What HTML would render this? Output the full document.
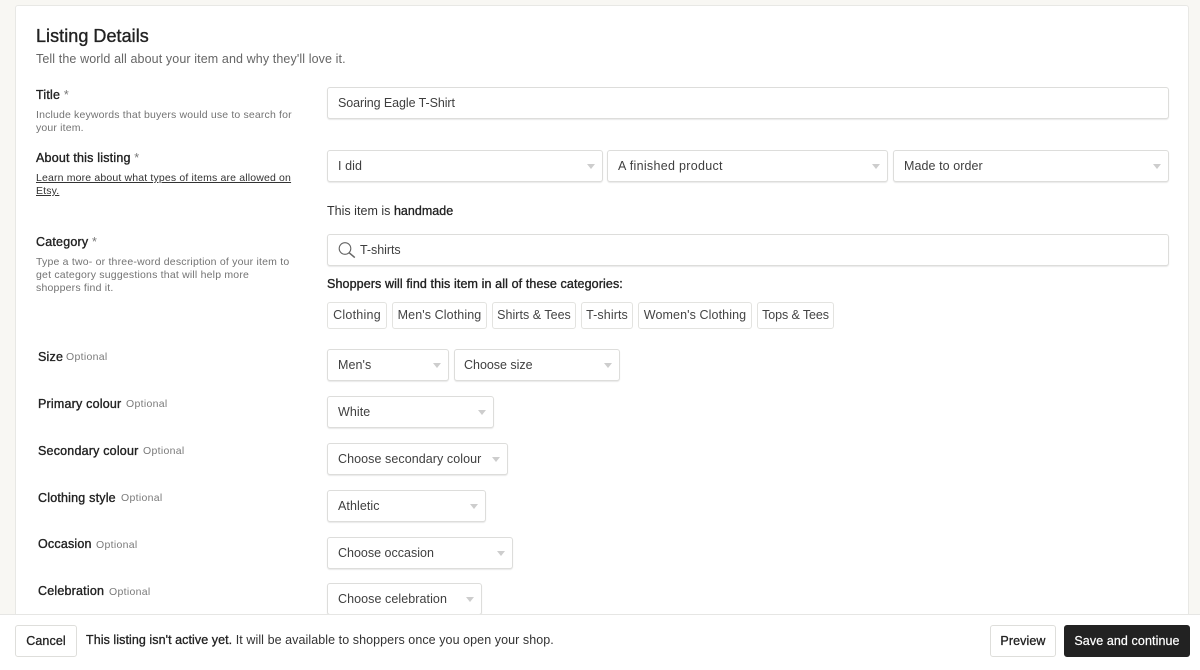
<!DOCTYPE html>
<html><head><meta charset="utf-8">
<style>
html,body{margin:0;padding:0}
body{width:1200px;height:670px;position:relative;overflow:hidden;background:#f8f7f3;font-family:"Liberation Sans",Arial,sans-serif;color:#2b2b2b}
.card{position:absolute;left:15px;top:5px;width:1174px;height:640px;background:#fff;border:1px solid #e8e8e5;border-radius:3px;box-sizing:border-box}
.t{position:absolute;white-space:nowrap;line-height:16px}
.h{font-size:18px;font-weight:400;color:#222;-webkit-text-stroke:.35px #222;letter-spacing:.05px}
.l{font-size:12.5px;color:#222;-webkit-text-stroke:.35px #222;letter-spacing:.2px}
.s{font-size:10.5px;color:#737373;line-height:13px;letter-spacing:.16px}
.o{font-size:10.5px;color:#7a7a7a;letter-spacing:.3px}
.star{color:#777;-webkit-text-stroke:0}
.b{position:absolute;box-sizing:border-box;background:#fff;border:1px solid #dddddb;border-radius:3px;box-shadow:0 1px 1px rgba(0,0,0,.09);height:32px;font-size:12.5px;line-height:30px;padding-left:10px;color:#3f3f3f;white-space:nowrap;letter-spacing:.07px}
.b.sel::after{content:"";position:absolute;right:7.5px;top:13px;border-left:4px solid transparent;border-right:4px solid transparent;border-top:5px solid #cdcdcd}
.c{position:absolute;top:302px;height:27px;box-sizing:border-box;border:1px solid #e3e3e0;border-radius:3px;font-size:12.5px;line-height:24px;text-align:center;color:#444;white-space:nowrap;letter-spacing:.1px}
.bar{position:absolute;left:0;top:614px;width:1200px;height:56px;background:#fff;border-top:1px solid #e6e6e4;box-sizing:border-box}
.btn{position:absolute;top:625px;height:32px;box-sizing:border-box;border:1px solid #dededb;border-radius:3px;background:#fff;font-size:12.5px;line-height:30px;text-align:center;color:#222;-webkit-text-stroke:.3px #222;white-space:nowrap;letter-spacing:.1px}
</style></head><body>
<div class="card"></div>

<div class="t h" style="left:36px;top:28px">Listing Details</div>
<div class="t" style="left:36px;top:51px;font-size:12.5px;color:#666;letter-spacing:.11px">Tell the world all about your item and why they'll love it.</div>

<div class="t l" style="left:36px;top:87px">Title <span class="star">*</span></div>
<div class="t s" style="left:36px;top:109px">Include keywords that buyers would use to search for<br>your item.</div>

<div class="t l" style="left:36px;top:150px">About this listing <span class="star">*</span></div>
<div class="t s" style="left:36px;top:172px;color:#333;text-decoration:underline">Learn more about what types of items are allowed on<br>Etsy.</div>

<div class="t l" style="left:36px;top:234px">Category <span class="star">*</span></div>
<div class="t s" style="left:36px;top:256px;letter-spacing:.2px">Type a two- or three-word description of your item to<br>get category suggestions that will help more<br>shoppers find it.</div>

<div class="t l" style="left:38px;top:349px">Size</div><div class="t o" style="left:66px;top:349px">Optional</div>
<div class="t l" style="left:38px;top:396px">Primary colour</div><div class="t o" style="left:126px;top:396px">Optional</div>
<div class="t l" style="left:38px;top:443px">Secondary colour</div><div class="t o" style="left:143px;top:443px">Optional</div>
<div class="t l" style="left:38px;top:490px">Clothing style</div><div class="t o" style="left:121px;top:490px">Optional</div>
<div class="t l" style="left:38px;top:536px">Occasion</div><div class="t o" style="left:96px;top:537px">Optional</div>
<div class="t l" style="left:38px;top:583px">Celebration</div><div class="t o" style="left:109px;top:584px">Optional</div>

<div class="b" style="left:327px;top:87px;width:842px;line-height:31px;letter-spacing:-.08px">Soaring Eagle T-Shirt</div>
<div class="b sel" style="left:327px;top:150px;width:276px">I did</div>
<div class="b sel" style="left:607px;top:150px;width:281px;letter-spacing:.3px">A finished product</div>
<div class="b sel" style="left:893px;top:150px;width:276px">Made to order</div>

<div class="t" style="left:327px;top:203px;font-size:12.5px;color:#333;letter-spacing:.02px">This item is <span style="color:#222;-webkit-text-stroke:.3px #222">handmade</span></div>

<div class="b" style="left:327px;top:234px;width:842px;padding-left:32px;letter-spacing:-.05px">T-shirts</div>
<svg style="position:absolute;left:337px;top:240px" width="20" height="20" viewBox="0 0 20 20" fill="none" stroke="#666" stroke-width="1.1"><circle cx="8" cy="8.5" r="5.8"/><path d="M12.2 12.8l5.6 4.8" stroke-width="1.5"/></svg>

<div class="t l" style="left:327px;top:276px;letter-spacing:.11px">Shoppers will find this item in all of these categories:</div>

<div class="c" style="left:327px;width:60px;letter-spacing:.25px">Clothing</div>
<div class="c" style="left:392px;width:95px">Men's Clothing</div>
<div class="c" style="left:492px;width:84px;letter-spacing:.02px">Shirts &amp; Tees</div>
<div class="c" style="left:581px;width:52px">T-shirts</div>
<div class="c" style="left:638px;width:114px">Women's Clothing</div>
<div class="c" style="left:757px;width:77px;letter-spacing:-.1px">Tops &amp; Tees</div>

<div class="b sel" style="left:327px;top:349px;width:122px">Men's</div>
<div class="b sel" style="left:454px;top:349px;width:166px;padding-left:9px;letter-spacing:-.02px">Choose size</div>
<div class="b sel" style="left:327px;top:396px;width:167px">White</div>
<div class="b sel" style="left:327px;top:443px;width:181px">Choose secondary colour</div>
<div class="b sel" style="left:327px;top:490px;width:159px">Athletic</div>
<div class="b sel" style="left:327px;top:537px;width:186px;letter-spacing:0">Choose occasion</div>
<div class="b sel" style="left:327px;top:583px;width:155px;line-height:31px">Choose celebration</div>

<div class="bar"></div>
<div class="btn" style="left:15px;width:62px">Cancel</div>
<div class="t" style="left:86px;top:632px;font-size:12.5px;color:#333;letter-spacing:.07px"><span style="color:#222;-webkit-text-stroke:.3px #222">This listing isn't active yet.</span> It will be available to shoppers once you open your shop.</div>
<div class="btn" style="left:990px;width:66px">Preview</div>
<div class="btn" style="left:1064px;width:126px;background:#222;border-color:#222;color:#fff;-webkit-text-stroke:.2px #fff">Save and continue</div>
</body></html>
